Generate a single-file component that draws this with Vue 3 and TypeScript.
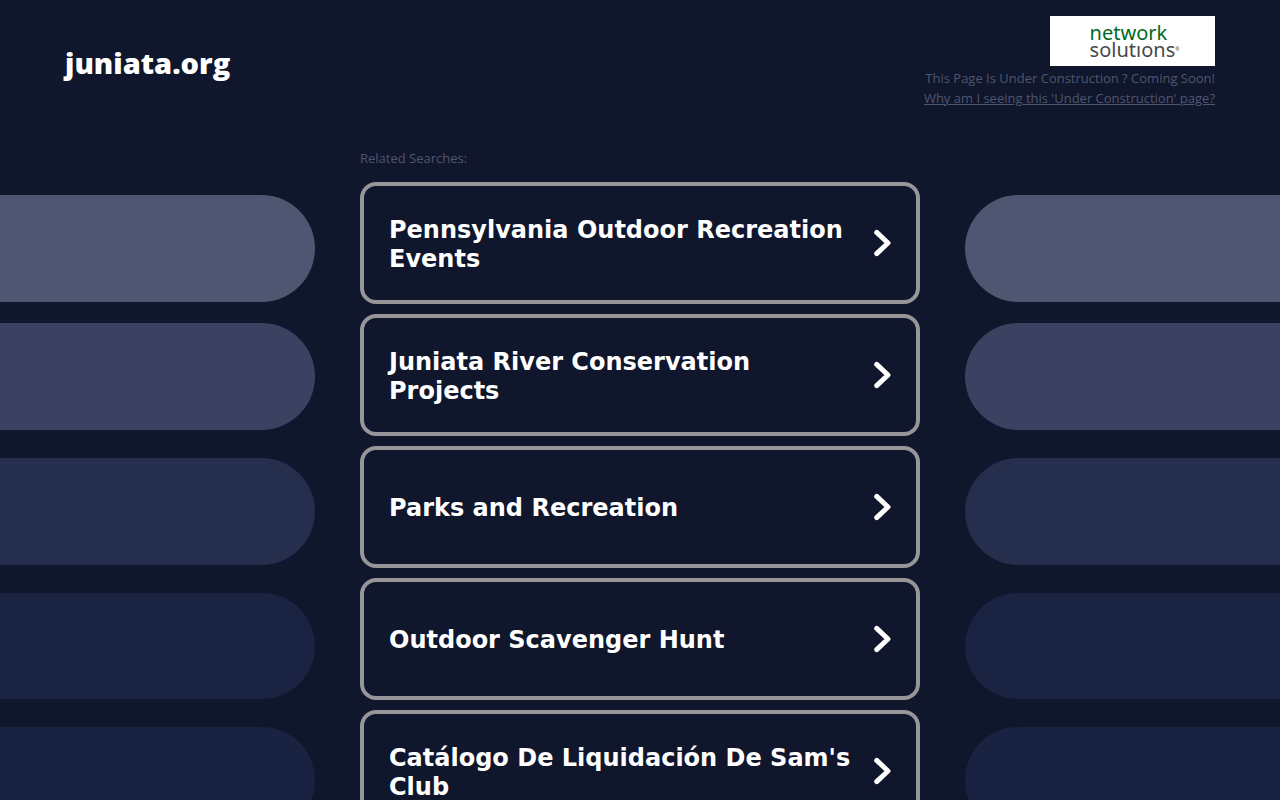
<script setup lang="ts">
interface Search {
  label: string
}

const searches: Search[] = [
  { label: 'Pennsylvania Outdoor Recreation Events' },
  { label: 'Juniata River Conservation Projects' },
  { label: 'Parks and Recreation' },
  { label: 'Outdoor Scavenger Hunt' },
  { label: "Catálogo De Liquidación De Sam's Club" },
]

const sides = ['left', 'right'] as const
</script>

<template>
  <div class="page">
    <header class="header">
      <h1 class="domain">juniata.org</h1>
      <div class="notice">
        <div class="logo" role="img" aria-label="network solutions">
          <div class="wordmark">
            <span class="network">network</span>
            <span class="solutions">solutıons<span class="mark">®</span></span>
          </div>
        </div>
        <p class="status">This Page Is Under Construction ? Coming Soon!</p>
        <a class="why" href="#">Why am I seeing this 'Under Construction' page?</a>
      </div>
    </header>

    <div class="body">
      <div v-for="side in sides" :key="side" class="pills" :class="side" aria-hidden="true">
        <div v-for="n in 5" :key="n" class="pill" :class="'tone-' + n"></div>
      </div>

      <main class="center">
        <h2 class="related">Related Searches:</h2>
        <ul class="list">
          <li v-for="search in searches" :key="search.label">
            <a class="card" href="#">
              <span class="label">{{ search.label }}</span>
              <svg class="chevron" width="18" height="28" viewBox="0 0 18 28" aria-hidden="true">
                <path d="M3.7 3.4L15 14L3.7 24.6" fill="none" stroke="#fff" stroke-width="5" stroke-linecap="round" stroke-linejoin="round" />
              </svg>
            </a>
          </li>
        </ul>
      </main>
    </div>
  </div>
</template>

<style>
body {
  margin: 0;
  background: #10162b;
}
</style>

<style scoped>
.page {
  min-height: 100vh;
  overflow: hidden;
  background: #10162b;
  color: #fff;
  font-family: "Open Sans", "Noto Sans", sans-serif;
}

.header {
  display: flex;
  justify-content: space-between;
  align-items: flex-start;
  padding: 16px 65px 0;
}

.domain {
  margin: 29px 0 0;
  font-size: 29px;
  line-height: 36px;
  font-weight: 800;
}

.notice {
  display: flex;
  flex-direction: column;
  align-items: flex-end;
  color: #4e5671;
  font-size: 13px;
  line-height: 20px;
  font-weight: 500;
}

.logo {
  box-sizing: border-box;
  display: flex;
  justify-content: center;
  align-items: center;
  width: 165px;
  height: 50px;
  margin-bottom: 2px;
  padding-left: 4px;
  background: #fff;
}

.wordmark {
  display: flex;
  flex-direction: column;
  font-family: "Noto Sans", sans-serif;
  font-size: 20px;
  line-height: 17px;
  font-weight: 400;
}

.network {
  color: #00691f;
}

.solutions {
  display: flex;
  align-items: center;
  color: #48484a;
}

.mark {
  font-size: 5px;
  line-height: 5px;
}

.status {
  margin: 0;
}

.why {
  color: inherit;
}

.body {
  display: grid;
  grid-template-columns: 1fr minmax(0, 560px) 1fr;
  column-gap: 45px;
  align-items: start;
  padding-top: 40px;
}

.pills {
  display: grid;
  gap: 28px;
  grid-row: 1;
  padding-top: 47px;
}

.left {
  grid-column: 1;
}

.right {
  grid-column: 3;
}

.pill {
  height: 107px;
}

.left .pill {
  border-radius: 0 54px 54px 0;
}

.right .pill {
  border-radius: 54px 0 0 54px;
}

.pill.tone-1 {
  margin-bottom: -7px;
  background: #4e5671;
}

.pill.tone-2 {
  background: #3b4261;
}

.pill.tone-3 {
  background: #262e4d;
}

.pill.tone-4 {
  height: 106px;
  background: #1b2343;
}

.pill.tone-5 {
  height: 106px;
  background: #192241;
}

.center {
  grid-column: 2;
  grid-row: 1;
}

.related {
  margin: 0 0 14px;
  color: #4e5671;
  font-size: 13px;
  line-height: 20px;
  font-weight: 500;
}

.list {
  display: grid;
  gap: 10px;
  margin: 0;
  padding: 0;
  list-style: none;
}

.card {
  box-sizing: border-box;
  display: flex;
  align-items: center;
  justify-content: space-between;
  gap: 20px;
  min-height: 122px;
  padding: 0 25px;
  border: 4px solid #969699;
  border-radius: 16px;
  color: #fff;
  font-family: "DejaVu Sans", Verdana, sans-serif;
  font-size: 24px;
  line-height: 29px;
  font-weight: 700;
  text-decoration: none;
}

.label {
  padding-top: 3px;
}

.chevron {
  flex: none;
}
</style>
